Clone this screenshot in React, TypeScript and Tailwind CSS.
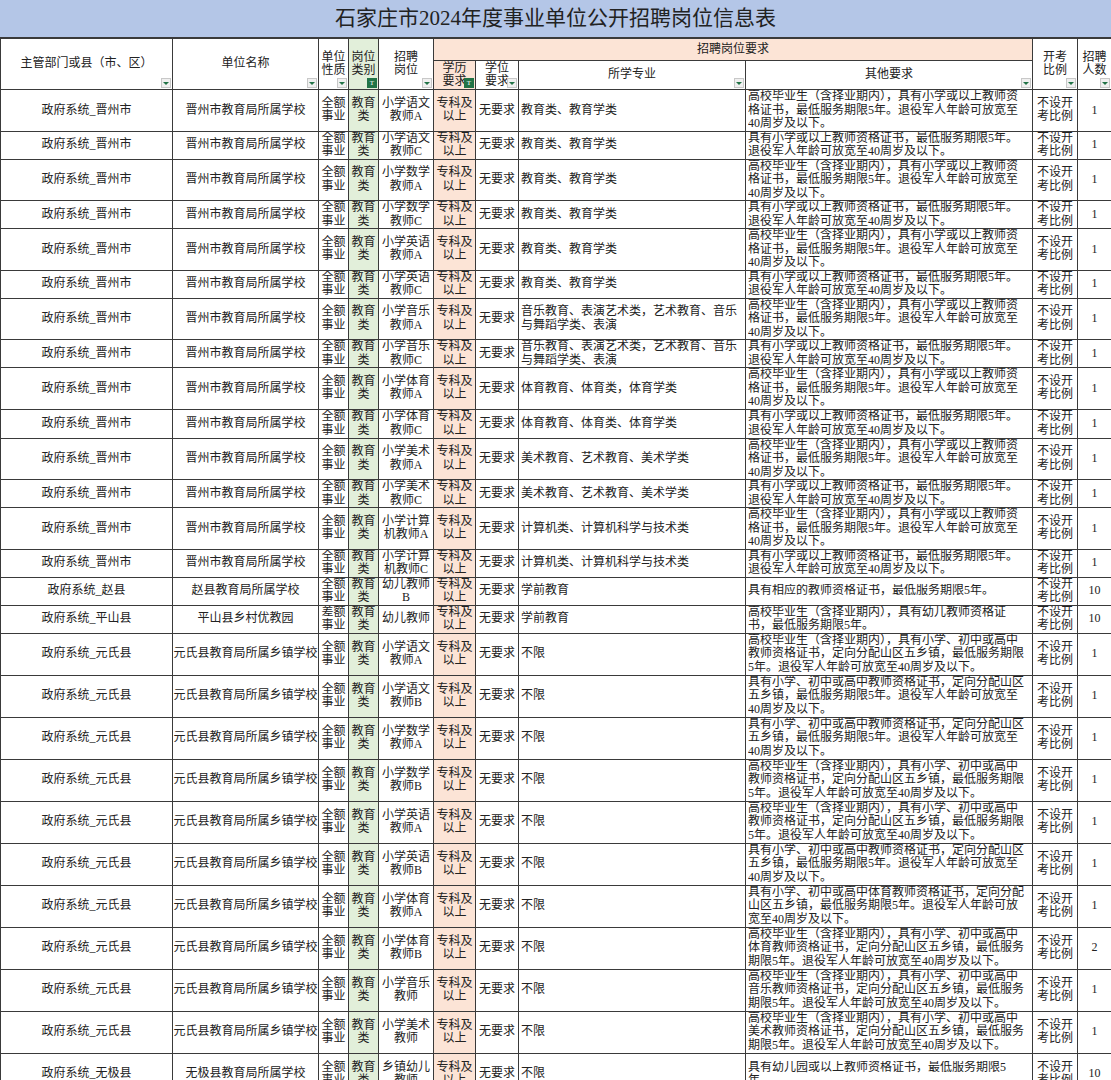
import React from 'react';

const A_JZ = '高校毕业生（含择业期内），具有小学或以上教师资格证书，最低服务期限5年。退役军人年龄可放宽至40周岁及以下。';
const C_JZ = '具有小学或以上教师资格证书，最低服务期限5年。退役军人年龄可放宽至40周岁及以下。';
const A_YS = '高校毕业生（含择业期内），具有小学、初中或高中教师资格证书，定向分配山区五乡镇，最低服务期限5年。退役军人年龄可放宽至40周岁及以下。';
const B_YS = '具有小学、初中或高中教师资格证书，定向分配山区五乡镇，最低服务期限5年。退役军人年龄可放宽至40周岁及以下。';

type Row = { dept: string; unit: string; nature: string; post: string; major: string; other: string; n: string; h: number };

const jz = (post: string, major: string, other: string, h: number): Row => ({
  dept: '政府系统_晋州市', unit: '晋州市教育局所属学校', nature: '全额事业', post, major, other, n: '1', h,
});
const ys = (post: string, other: string, n = '1'): Row => ({
  dept: '政府系统_元氏县', unit: '元氏县教育局所属乡镇学校', nature: '全额事业', post, major: '不限', other, n, h: 42,
});

const rows: Row[] = [
  jz('小学语文教师A', '教育类、教育学类', A_JZ, 41),
  jz('小学语文教师C', '教育类、教育学类', C_JZ, 28),
  jz('小学数学教师A', '教育类、教育学类', A_JZ, 41),
  jz('小学数学教师C', '教育类、教育学类', C_JZ, 28),
  jz('小学英语教师A', '教育类、教育学类', A_JZ, 41),
  jz('小学英语教师C', '教育类、教育学类', C_JZ, 28),
  jz('小学音乐教师A', '音乐教育、表演艺术类，艺术教育、音乐与舞蹈学类、表演', A_JZ, 41),
  jz('小学音乐教师C', '音乐教育、表演艺术类，艺术教育、音乐与舞蹈学类、表演', C_JZ, 28),
  jz('小学体育教师A', '体育教育、体育类，体育学类', A_JZ, 41),
  jz('小学体育教师C', '体育教育、体育类、体育学类', C_JZ, 29),
  jz('小学美术教师A', '美术教育、艺术教育、美术学类', A_JZ, 41),
  jz('小学美术教师C', '美术教育、艺术教育、美术学类', C_JZ, 28),
  jz('小学计算机教师A', '计算机类、计算机科学与技术类', A_JZ, 41),
  jz('小学计算机教师C', '计算机类、计算机科学与技术类', C_JZ, 28),
  { dept: '政府系统_赵县', unit: '赵县教育局所属学校', nature: '全额事业', post: '幼儿教师B', major: '学前教育', other: '具有相应的教师资格证书，最低服务期限5年。', n: '10', h: 28 },
  { dept: '政府系统_平山县', unit: '平山县乡村优教园', nature: '差额事业', post: '幼儿教师', major: '学前教育', other: '高校毕业生（含择业期内），具有幼儿教师资格证书，最低服务期限5年。', n: '10', h: 28 },
  ys('小学语文教师A', A_YS),
  ys('小学语文教师B', B_YS),
  ys('小学数学教师A', B_YS),
  ys('小学数学教师B', A_YS),
  ys('小学英语教师A', A_YS),
  ys('小学英语教师B', B_YS),
  ys('小学体育教师A', '具有小学、初中或高中体育教师资格证书，定向分配山区五乡镇，最低服务期限5年。退役军人年龄可放宽至40周岁及以下。'),
  ys('小学体育教师B', '高校毕业生（含择业期内），具有小学、初中或高中体育教师资格证书，定向分配山区五乡镇，最低服务期限5年。退役军人年龄可放宽至40周岁及以下。', '2'),
  ys('小学音乐教师', '高校毕业生（含择业期内），具有小学、初中或高中音乐教师资格证书，定向分配山区五乡镇，最低服务期限5年。退役军人年龄可放宽至40周岁及以下。'),
  ys('小学美术教师', '高校毕业生（含择业期内），具有小学、初中或高中美术教师资格证书，定向分配山区五乡镇，最低服务期限5年。退役军人年龄可放宽至40周岁及以下。'),
  { dept: '政府系统_无极县', unit: '无极县教育局所属学校', nature: '全额事业', post: '乡镇幼儿教师', major: '不限', other: '具有幼儿园或以上教师资格证书，最低服务期限5年。', n: '10', h: 42 },
];

function Drop({ on }: { on?: boolean }) {
  if (on)
    return (
      <span className="absolute bottom-[1px] right-[1px] flex h-[10px] w-[10px] items-center justify-center bg-[#217346] text-[7px] leading-none text-white">
        T
      </span>
    );
  return (
    <span className="absolute bottom-[1px] right-[1px] flex h-[10px] w-[10px] items-center justify-center border border-[#c8c8c8] bg-[#f0f0f0]">
      <span className="h-0 w-0 border-x-[3px] border-t-[3px] border-x-transparent border-t-[#217346]" />
    </span>
  );
}

const td = 'border border-[#3a3a3a] overflow-hidden';

export default function App() {
  return (
    <div className="h-[1080px] w-[1111px] overflow-hidden bg-white text-[12px] leading-[13.5px] text-[#222]" style={{ fontFamily: '"Liberation Serif", "Noto Sans CJK SC", serif' }}>
      <div className="flex h-[38px] items-center justify-center border-b border-[#3a3a3a] bg-[#b4c6e7] text-[21px] text-[#222]">
        石家庄市2024年度事业单位公开招聘岗位信息表
      </div>
      <table className="w-[1111px] table-fixed border-collapse">
        <colgroup>
          <col className="w-[172px]" />
          <col className="w-[146px]" />
          <col className="w-[30px]" />
          <col className="w-[30px]" />
          <col className="w-[55px]" />
          <col className="w-[42px]" />
          <col className="w-[43px]" />
          <col className="w-[227px]" />
          <col className="w-[287px]" />
          <col className="w-[45px]" />
          <col className="w-[34px]" />
        </colgroup>
        <thead>
          <tr className="h-[22px]">
            <th rowSpan={2} className={`${td} relative font-normal`}>主管部门或县（市、区）<Drop /></th>
            <th rowSpan={2} className={`${td} relative font-normal`}>单位名称<Drop /></th>
            <th rowSpan={2} className={`${td} relative font-normal`}>单位<br />性质<Drop /></th>
            <th rowSpan={2} className={`${td} relative bg-[#e2efda] font-normal`}>岗位<br />类别<Drop on /></th>
            <th rowSpan={2} className={`${td} relative font-normal`}>招聘<br />岗位<Drop /></th>
            <th colSpan={4} className={`${td} bg-[#fce4d6] font-normal`}>招聘岗位要求</th>
            <th rowSpan={2} className={`${td} relative font-normal`}>开考<br />比例<Drop /></th>
            <th rowSpan={2} className={`${td} relative font-normal`}>招聘<br />人数<Drop /></th>
          </tr>
          <tr className="h-[29px]">
            <th className={`${td} relative bg-[#fce4d6] font-normal`}>学历<br />要求<Drop on /></th>
            <th className={`${td} relative font-normal`}>学位<br />要求<Drop /></th>
            <th className={`${td} relative font-normal`}>所学专业<Drop /></th>
            <th className={`${td} relative font-normal`}>其他要求<Drop /></th>
          </tr>
        </thead>
        <tbody>
          {rows.map((r, i) => (
            <tr key={i} style={{ height: r.h }}>
              <td className={`${td} text-center`}>{r.dept}</td>
              <td className={`${td} text-center`}>{r.unit}</td>
              <td className={`${td} px-[1px] text-center`}>{r.nature}</td>
              <td className={`${td} bg-[#e2efda] px-[1px] text-center`}>教育类</td>
              <td className={`${td} px-[1px] text-center`}>{r.post}</td>
              <td className={`${td} bg-[#fce4d6] px-[2px] text-center`}>专科及以上</td>
              <td className={`${td} text-center`}>无要求</td>
              <td className={`${td} px-[2px]`}>{r.major}</td>
              <td className={`${td} pl-[2px] pr-[8px]`}>
                <div className="max-h-[41px] overflow-hidden">{r.other}</div>
              </td>
              <td className={`${td} px-[4px] text-center`}>不设开考比例</td>
              <td className={`${td} text-center`}>{r.n}</td>
            </tr>
          ))}
        </tbody>
      </table>
    </div>
  );
}
